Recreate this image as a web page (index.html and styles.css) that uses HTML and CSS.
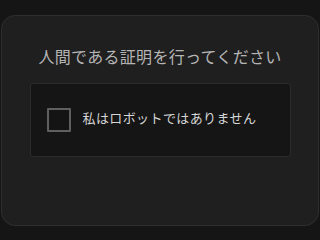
FILE: index.html
```html
<!DOCTYPE html>
<html lang="ja">
<head>
<meta charset="utf-8">
<link rel="stylesheet" href="styles.css">
</head>
<body>
<div class="card">
  <h1 class="title">人間である証明を行ってください</h1>
  <div class="box">
    <span class="check"></span>
    <span class="label">私はロボットではありません</span>
  </div>
</div>
</body>
</html>
```
FILE: styles.css
```css
html, body {
  margin: 0;
  padding: 0;
  background: #151515;
  width: 320px;
  height: 240px;
  overflow: hidden;
  font-family: "Noto Sans CJK JP", "Noto Sans", sans-serif;
}
.card {
  box-sizing: border-box;
  margin: 15px 1px 0 1px;
  width: 318px;
  height: 211px;
  background: #1f1f1f;
  border: 1px solid #2e2e2e;
  border-radius: 14px;
  padding: 31px 28px 0 28px;
  display: flex;
  flex-direction: column;
  align-items: center;
}
.title {
  margin: 0;
  font-size: 16px;
  font-weight: 400;
  line-height: 19px;
  color: #b5b5b5;
  letter-spacing: 0.3px;
}
.box {
  box-sizing: border-box;
  margin-top: 17px;
  width: 261px;
  height: 74px;
  background: #151515;
  border: 1px solid #2c2c2c;
  border-radius: 3px;
  display: flex;
  align-items: center;
  padding-left: 16px;
  gap: 12px;
}
.check {
  box-sizing: border-box;
  width: 24px;
  height: 24px;
  border: 2px solid #5f5f5f;
  border-radius: 1px;
  background: #141414;
  margin-top: -1px;
}
.label {
  font-size: 13px;
  line-height: 16px;
  color: #d6d6d6;
  letter-spacing: 0.4px;
  margin-bottom: 4px;
}
```
